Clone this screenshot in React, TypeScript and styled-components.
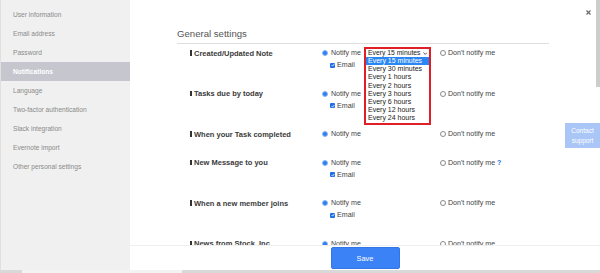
import React from "react";
import styled, { createGlobalStyle } from "styled-components";

const Global = createGlobalStyle`
  html, body { margin: 0; padding: 0; }
  body {
    font-family: "Liberation Sans", Arial, sans-serif;
    background: #fff;
    width: 600px;
    height: 273px;
    overflow: hidden;
  }
  * { box-sizing: border-box; }
`;

const Page = styled.div`
  width: 600px;
  height: 273px;
  display: flex;
  flex-direction: column;
  overflow: hidden;
`;

const Body = styled.div`
  height: 270px;
  display: flex;
`;

const Sidebar = styled.nav`
  width: 130px;
  flex: none;
  background: #f0f0f0;
  border-left: 1px solid #e0e0e0;
  padding-top: 5px;
  display: flex;
  flex-direction: column;
`;

const NavItem = styled.div<{ $active?: boolean }>`
  height: 19px;
  line-height: 19px;
  padding-left: 12px;
  font-size: 6.6px;
  white-space: nowrap;
  color: ${(p) => (p.$active ? "#ffffff" : "#8a8a8a")};
  background: ${(p) => (p.$active ? "#c5c6ce" : "transparent")};
  font-weight: ${(p) => (p.$active ? 700 : 400)};
`;

const Main = styled.main`
  flex: 1;
  position: relative;
  display: flex;
  flex-direction: column;
  min-width: 0;
`;

const Scroll = styled.div`
  flex: 1;
  overflow: hidden;
  padding: 27px 51px 0 47px;
`;

const Heading = styled.h2`
  margin: 0;
  font-size: 9.6px;
  font-weight: 400;
  line-height: 13px;
  color: #555;
  padding-bottom: 3px;
  border-bottom: 1px solid #dedede;
`;

const Rows = styled.div`
  margin-top: 3px;
  padding-left: 13px;
`;

const Row = styled.div`
  display: grid;
  grid-template-columns: 132px 42px 76px 1fr;
  padding-bottom: 16.5px;
`;

const Label = styled.div`
  height: 12px;
  display: flex;
  align-items: center;
  font-size: 7.5px;
  font-weight: 700;
  color: #3a3a3a;
  white-space: nowrap;
`;

const Bar = styled.span`
  width: 1.6px;
  height: 5.5px;
  background: #333;
  margin-right: 2.4px;
`;

const Col = styled.div`
  display: flex;
  flex-direction: column;
`;

const Option = styled.div<{ $indent?: boolean }>`
  height: 12px;
  display: flex;
  align-items: center;
  padding-left: ${(p) => (p.$indent ? "8px" : "0")};
  font-size: 7.1px;
  color: #444;
  white-space: nowrap;
`;

const Radio = styled.span<{ $checked?: boolean }>`
  width: 6px;
  height: 6px;
  border-radius: 50%;
  flex: none;
  margin-right: ${(p) => (p.$checked ? "3px" : "2px")};
  border: 1px solid ${(p) => (p.$checked ? "#8db8f6" : "#8a8a8a")};
  background: ${(p) => (p.$checked ? "#2f7df0" : "#fff")};
`;

const Check = styled.span`
  width: 5px;
  height: 5px;
  border-radius: 1px;
  background: #1f6fe6;
  margin-right: 2px;
  display: flex;
  align-items: center;
  justify-content: center;
  flex: none;
`;

const Help = styled.span`
  color: #2a6fd6;
  font-weight: 700;
  margin-left: 2px;
`;

const SelectCell = styled.div`
  position: relative;
`;

const Dropdown = styled.div`
  position: absolute;
  top: 0;
  left: 0;
  width: 67px;
  border: 2px solid #e01e26;
  background: #fff;
  z-index: 2;
  padding-bottom: 0.5px;
`;

const SelectBox = styled.div`
  height: 8px;
  line-height: 8px;
  font-size: 6.8px;
  padding: 0 2px 0 2px;
  display: flex;
  align-items: center;
  justify-content: space-between;
  color: #222;
  white-space: nowrap;
`;

const ListItem = styled.div<{ $selected?: boolean }>`
  height: 8.2px;
  line-height: 8.2px;
  font-size: 7px;
  padding: 0 2px;
  white-space: nowrap;
  color: ${(p) => (p.$selected ? "#fff" : "#222")};
  background: ${(p) => (p.$selected ? "#2a86f3" : "transparent")};
`;

const Footer = styled.footer`
  height: 25px;
  flex: none;
  border-top: 1px solid #efefef;
  display: flex;
  justify-content: center;
  padding-top: 1px;
`;

const SaveButton = styled.button`
  width: 69px;
  height: 22px;
  border: 1px solid #3176e6;
  border-radius: 2px;
  background: #3a82f5;
  color: #fff;
  font-family: "Liberation Sans", Arial, sans-serif;
  font-size: 7.4px;
  padding: 0;
`;

const Close = styled.div`
  position: absolute;
  top: 9.5px;
  right: 9.5px;
  width: 5px;
  height: 5px;
  display: flex;
`;

const ScrollThumb = styled.div`
  position: absolute;
  top: 0;
  right: 0;
  width: 4.5px;
  height: 87px;
  background: #cdcdcd;
`;

const Contact = styled.div`
  position: absolute;
  right: 0;
  top: 123px;
  width: 35px;
  height: 25px;
  background: #a9c6f7;
  color: #fff;
  font-size: 6.5px;
  line-height: 10px;
  text-align: center;
  padding-top: 2.5px;
`;

const HScroll = styled.div`
  height: 3px;
  background: #d9d9d9;
  display: flex;
`;

const HThumb = styled.div`
  margin-left: 22px;
  width: 160px;
  background: #f3f3f3;
`;

const navItems = [
  "User information",
  "Email address",
  "Password",
  "Notifications",
  "Language",
  "Two-factor authentication",
  "Slack integration",
  "Evernote import",
  "Other personal settings",
];

const options = [
  "Every 15 minutes",
  "Every 30 minutes",
  "Every 1 hours",
  "Every 2 hours",
  "Every 3 hours",
  "Every 6 hours",
  "Every 12 hours",
  "Every 24 hours",
];

type RowData = { label: string; email: boolean; help?: boolean; dropdown?: boolean };

const rows: RowData[] = [
  { label: "Created/Updated Note", email: true, dropdown: true },
  { label: "Tasks due by today", email: true },
  { label: "When your Task completed", email: false },
  { label: "New Message to you", email: true, help: true },
  { label: "When a new member joins", email: true },
  { label: "News from Stock, Inc", email: true },
];

const CheckMark = () => (
  <svg width="4" height="4" viewBox="0 0 4 4">
    <path d="M0.6 2.1 L1.6 3.1 L3.4 0.9" fill="none" stroke="#fff" strokeWidth="0.8" />
  </svg>
);

const Chevron = () => (
  <svg width="4.5" height="3" viewBox="0 0 5 3">
    <path d="M0.5 0.5 L2.5 2.5 L4.5 0.5" fill="none" stroke="#333" strokeWidth="0.9" />
  </svg>
);

export default function App() {
  return (
    <Page>
      <Global />
      <Body>
        <Sidebar>
          {navItems.map((n) => (
            <NavItem key={n} $active={n === "Notifications"}>
              {n}
            </NavItem>
          ))}
        </Sidebar>
        <Main>
          <Scroll>
            <Heading>General settings</Heading>
            <Rows>
              {rows.map((r) => (
                <Row key={r.label}>
                  <Label>
                    <Bar />
                    {r.label}
                  </Label>
                  <Col>
                    <Option>
                      <Radio $checked />
                      Notify me
                    </Option>
                    {r.email && (
                      <Option $indent>
                        <Check>
                          <CheckMark />
                        </Check>
                        Email
                      </Option>
                    )}
                  </Col>
                  <SelectCell>
                    {r.dropdown && (
                      <Dropdown>
                        <SelectBox>
                          <span>Every 15 minutes</span>
                          <Chevron />
                        </SelectBox>
                        {options.map((o, i) => (
                          <ListItem key={o} $selected={i === 0}>
                            {o}
                          </ListItem>
                        ))}
                      </Dropdown>
                    )}
                  </SelectCell>
                  <Col>
                    <Option>
                      <Radio />
                      Don't notify me
                      {r.help && <Help>?</Help>}
                    </Option>
                  </Col>
                </Row>
              ))}
            </Rows>
          </Scroll>
          <Footer>
            <SaveButton>Save</SaveButton>
          </Footer>
          <Close>
            <svg width="5" height="5" viewBox="0 0 5 5">
              <path d="M0.5 0.5 L4.5 4.5 M4.5 0.5 L0.5 4.5" stroke="#666" strokeWidth="1.1" />
            </svg>
          </Close>
          <ScrollThumb />
          <Contact>
            Contact
            <br />
            support
          </Contact>
        </Main>
      </Body>
      <HScroll>
        <HThumb />
      </HScroll>
    </Page>
  );
}
